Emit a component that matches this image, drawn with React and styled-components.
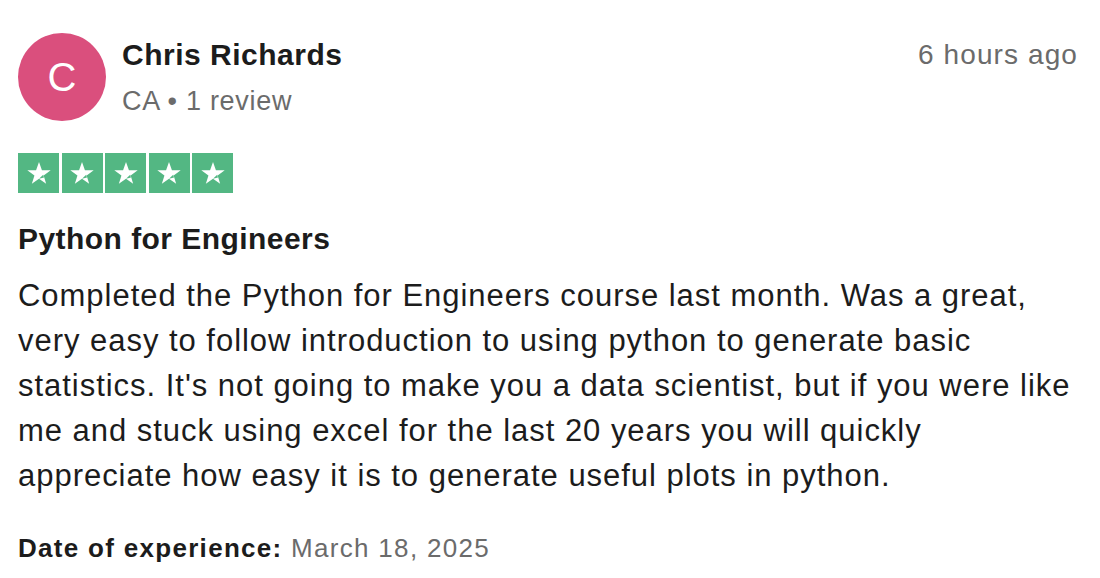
import React from "react";
import styled, { createGlobalStyle } from "styled-components";

const GlobalStyle = createGlobalStyle`
  html, body {
    margin: 0;
    padding: 0;
    background: #ffffff;
  }
  body {
    font-family: "Liberation Sans", Arial, Helvetica, sans-serif;
    color: #1c1c1c;
  }
`;

const Card = styled.article`
  width: 1100px;
  height: 578px;
  box-sizing: border-box;
  padding: 33px 22px 0 18px;
`;

const Header = styled.header`
  display: flex;
  align-items: flex-start;
`;

const Avatar = styled.div`
  width: 88px;
  height: 88px;
  border-radius: 50%;
  background: ${(p) => p.$color};
  color: #ffffff;
  font-size: 40px;
  display: flex;
  align-items: center;
  justify-content: center;
  flex-shrink: 0;
`;

const Who = styled.div`
  flex: 1;
  display: flex;
  flex-direction: column;
  margin-left: 16px;
  padding-top: 4px;
`;

const Name = styled.div`
  font-size: 30px;
  font-weight: 700;
  letter-spacing: 0.5px;
  line-height: 36px;
  color: #1c1c1c;
`;

const Meta = styled.div`
  font-size: 27px;
  letter-spacing: 0.7px;
  line-height: 36px;
  margin-top: 10px;
  color: #6b6b6b;
`;

const Time = styled.time`
  font-size: 28px;
  letter-spacing: 1.1px;
  line-height: 36px;
  color: #6b6b6b;
  padding-top: 4px;
`;

const Stars = styled.div`
  display: flex;
  gap: 2.5px;
  margin-top: 32px;
`;

const StarBox = styled.div`
  width: 41px;
  height: 40px;
  background: #53b783;
  display: flex;
  align-items: center;
  justify-content: center;
`;

const Title = styled.h2`
  margin: 28px 0 0;
  font-size: 30px;
  font-weight: 700;
  letter-spacing: 0.45px;
  line-height: 36px;
  color: #1c1c1c;
`;

const Body = styled.p`
  margin: 16px 0 0;
  font-size: 31px;
  letter-spacing: 0.97px;
  line-height: 45px;
  color: #1c1c1c;
`;

const Experience = styled.p`
  margin: 32px 0 0;
  font-size: 26px;
  letter-spacing: 1.3px;
  line-height: 36px;
  color: #6b6b6b;

  strong {
    color: #1c1c1c;
    font-weight: 700;
  }
`;

const Star = () => (
  <svg width="26" height="26" viewBox="0 0 24 24">
    <path
      d="M12 1.8l2.7 7.6h8.1l-6.5 4.8 2.3 7.7L12 17.2l-6.6 4.7 2.4-7.7L1.2 9.4h8.1z"
      fill="#ffffff"
    />
    <path d="M15.9 13.6l0.7 2.6L12 17.2z" fill="#53b783" />
  </svg>
);

export default function App() {
  return (
    <>
      <GlobalStyle />
      <Card>
        <Header>
          <Avatar $color="#da4f7d">C</Avatar>
          <Who>
            <Name>Chris Richards</Name>
            <Meta>CA • 1 review</Meta>
          </Who>
          <Time>6 hours ago</Time>
        </Header>
        <Stars>
          {[0, 1, 2, 3, 4].map((i) => (
            <StarBox key={i}>
              <Star />
            </StarBox>
          ))}
        </Stars>
        <Title>Python for Engineers</Title>
        <Body>
          Completed the Python for Engineers course last month. Was a great,
          very easy to follow introduction to using python to generate basic
          statistics. It's not going to make you a data scientist, but if you
          were like me and stuck using excel for the last 20 years you will
          quickly appreciate how easy it is to generate useful plots in python.
        </Body>
        <Experience>
          <strong>Date of experience:</strong> March 18, 2025
        </Experience>
      </Card>
    </>
  );
}
